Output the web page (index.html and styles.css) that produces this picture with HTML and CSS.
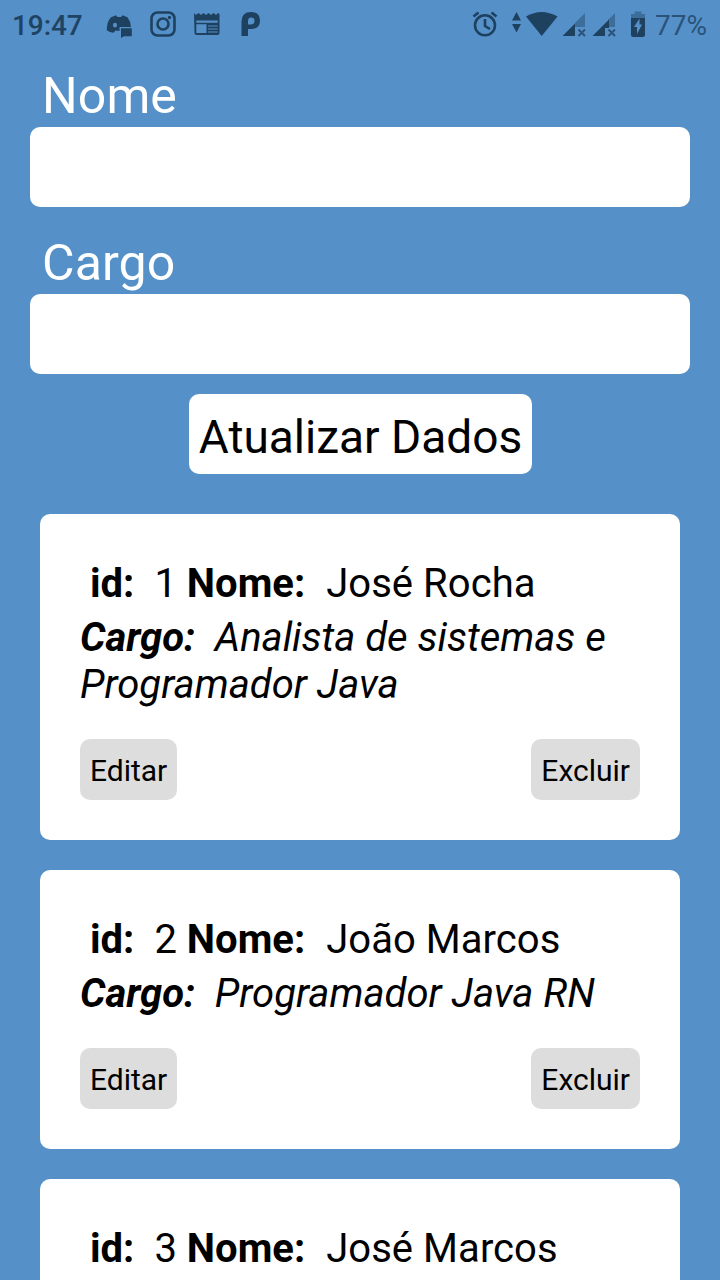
FILE: index.html
```html
<!DOCTYPE html>
<html lang="pt-BR">
<head>
<meta charset="utf-8">
<title>Cadastro</title>
<link rel="stylesheet" href="styles.css">
</head>
<body>
<div class="screen">
  <header class="status">
    <span class="clock">19:47</span>
    <svg class="tray" width="156" height="28" viewBox="106 10 156 28">
      <path fill-rule="evenodd" d="M111 17.200L116 15.200L117.500 17H121L122.500 15.200L127.500 17.200Q130.500 21 131 27H119.500V31L115.500 30.500L113.500 32.800Q109.500 32.500 106.800 30.200Q106.500 22 111 17.200ZM115 22.800A2 2.400 0 1 0 115 27.600A2 2.400 0 1 0 115 22.800Z"/>
      <path d="M121 28.200H131.800V36.200H124L121 38Z"/>
      <rect class="line" x="151.500" y="12.500" width="23" height="23" rx="6"/>
      <circle class="line" cx="163" cy="24" r="5.500"/>
      <circle cx="169.500" cy="17.500" r="1.700"/>
      <path fill-rule="evenodd" d="M194 13L196 15L198.500 13L201 15L203.500 13L206 15L208.500 13L211 15L213.500 13L216 15L218 13L219.500 14V33Q219.500 35 217.500 35H196.500Q194.500 35 194.500 33ZM196.300 20.500V22.800H217.700V20.500ZM196.300 24.300V33H206.500V24.300ZM208 25.500V26.500H217.700V25.500ZM208 28.500V29.500H217.700V28.500ZM208 31.500V32.500H217.700V31.500Z"/>
      <path fill-rule="evenodd" d="M241.500 36V21.500Q241.500 12 251 12Q260 12 260 20.500Q260 29 251 29H248V36ZM248 24.500H251Q254.500 24.500 254.500 20.800Q254.500 17.500 251 17.500Q248 17.500 248 21Z"/>
    </svg>
    <svg class="signals" width="176" height="30" viewBox="472 9 176 30">
      <circle class="line" cx="485" cy="25.300" r="10"/>
      <path class="line" d="M485 19V26L490 29M473.500 16.500L478.500 12.500M491.500 12.500L496.500 16.500"/>
      <path d="M512 20.500L516.500 12L521 20.500ZM512 24L516.500 32.500L521 24Z"/>
      <path d="M526 16.500Q541.500 7.500 557.500 16.500L541.700 36Z"/>
      <path class="faint" d="M585 13V27H575V23Z"/>
      <path d="M562.500 36L575 23.500V36Z"/>
      <path class="cross" d="M578.500 29.500L585 36M585 29.500L578.500 36"/>
      <path class="faint" d="M615 13V27H608V20Z"/>
      <path d="M592.500 36L609 19.500V28H605V36Z"/>
      <path class="cross" d="M608.500 29.500L615 36M615 29.500L608.500 36"/>
      <path class="faint" d="M634.500 11.500H641.500V14H645V18.500H631V14H634.500Z"/>
      <path fill-rule="evenodd" d="M631 18H645V35Q645 37 643 37H633Q631 37 631 35ZM639.500 18.500L634 27H637V34L642 24.500H639.500Z"/>
    </svg>
    <span class="battery">77%</span>
  </header>
  <form class="form">
    <label class="label" for="nome">Nome</label>
    <input class="field" id="nome">
    <label class="label second" for="cargo">Cargo</label>
    <input class="field" id="cargo">
    <button class="submit" type="button">Atualizar Dados</button>
  </form>
  <main class="list">
    <article class="card">
      <p class="person"><b class="id">id:</b><span class="num">1</span><b>Nome:</b><span class="name">José Rocha</span></p>
      <p class="role"><b>Cargo:</b>&nbsp; Analista de sistemas e<br>Programador Java</p>
      <div class="actions"><button class="action" type="button">Editar</button><button class="action" type="button">Excluir</button></div>
    </article>
    <article class="card">
      <p class="person"><b class="id">id:</b><span class="num">2</span><b>Nome:</b><span class="name">João Marcos</span></p>
      <p class="role"><b>Cargo:</b>&nbsp; Programador Java RN</p>
      <div class="actions"><button class="action" type="button">Editar</button><button class="action" type="button">Excluir</button></div>
    </article>
    <article class="card">
      <p class="person"><b class="id">id:</b><span class="num">3</span><b>Nome:</b><span class="name">José Marcos</span></p>
    </article>
  </main>
</div>
</body>
</html>
```
FILE: styles.css
```css
* { box-sizing: border-box; }
body { margin: 0; font-family: Roboto, sans-serif; }
button, input { font: inherit; border: 0; padding: 0; color: #000; }
p { margin: 0; }
.screen { height: 1280px; overflow: hidden; background: #5591c8; }
.status { height: 48px; display: flex; align-items: center; padding: 2px 13px 0 12px; font-size: 28px; color: #1f4363; }
.clock { width: 94px; letter-spacing: -.1px; font-weight: 500; }
.tray, .signals { display: block; margin-top: -2px; fill: #1f4160; }
.signals { margin-left: auto; }
.line { fill: none; stroke: #1f4160; stroke-width: 2.6; }
.cross { fill: none; stroke: #2b5379; stroke-width: 2; }
.faint { fill: #3d6e9b; }
.battery { margin-left: 7px; color: #2b5379; }
.form { display: flex; flex-direction: column; padding: 18px 30px 0; }
.label { height: 61px; padding-left: 12px; font-size: 50px; line-height: 60px; letter-spacing: .1px; color: #fff; }
.second { margin-top: 26px; }
.field { height: 80px; border-radius: 10px; background: #fff; }
.submit { align-self: center; width: 343px; height: 80px; margin-top: 20px; padding: 6px 0 0 1px; border-radius: 10px; background: #fff; font-size: 46px; white-space: nowrap; }
.list { display: flex; flex-direction: column; gap: 30px; padding: 40px 40px 0; }
.card { padding: 40px; border-radius: 10px; background: #fff; font-size: 40px; line-height: 47px; }
.person { display: flex; padding: 6px 0 7px 10px; white-space: nowrap; }
.num { margin: 0 10px 0 20px; }
.name { margin-left: 21px; letter-spacing: .05px; }
.role { font-style: italic; margin-bottom: 31px; }
.actions { display: flex; justify-content: space-between; }
.action { height: 61px; padding: 1px 10px 0; border-radius: 10px; background: #ddd; font-size: 30px; }
```
